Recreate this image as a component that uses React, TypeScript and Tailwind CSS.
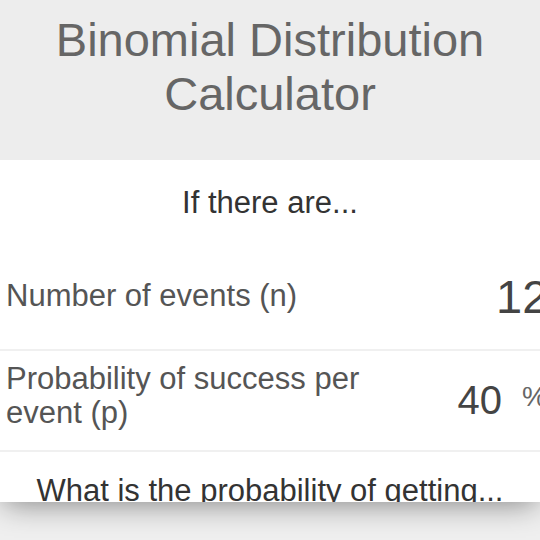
import type { FC } from "react";

const font = { fontFamily: '"Liberation Sans", Arial, sans-serif' };

const App: FC = () => {
  return (
    <div className="w-[540px] h-[540px] overflow-hidden bg-[#efefef]" style={font}>
      <div className="relative w-[540px] h-[502px] overflow-hidden bg-white shadow-[0_6px_28px_-4px_rgba(0,0,0,0.45)]">
        <header className="h-[160px] bg-[#ededed] pt-[13px] text-center">
          <h1 className="text-[47px] leading-[54px] text-[#666666]">
            Binomial Distribution
            <br />
            Calculator
          </h1>
        </header>

        <section>
          <div className="h-[90px] pt-[27px] text-center text-[31px] leading-[32px] text-[#333333]">
            If there are...
          </div>

          <div className="flex h-[101px] items-start border-b-2 border-[#f0f0f0]">
            <label className="w-[496px] shrink-0 pl-[6px] pt-[30px] text-[31px] leading-[32px] text-[#555555]">
              Number of events (n)
            </label>
            <span className="shrink-0 whitespace-nowrap pt-[23px] text-[47px] leading-[47px] text-[#444444]">
              12
            </span>
          </div>

          <div className="flex h-[101px] items-start border-b-2 border-[#f0f0f0]">
            <label className="w-[420px] shrink-0 pl-[6px] pt-[11px] text-[31px] leading-[34px] text-[#555555]">
              Probability of success per event (p)
            </label>
            <div className="flex shrink-0 items-center pt-[29px]">
              <span className="w-[82px] text-right text-[40px] leading-[40px] text-[#444444]">
                40
              </span>
              <span className="ml-[20px] mb-[6px] whitespace-nowrap text-[28px] leading-[28px] text-[#666666]">
                %
              </span>
            </div>
          </div>

          <div className="pt-[23px] text-center text-[31px] leading-[32px] whitespace-nowrap text-[#333333]">
            What is the probability of getting...
          </div>
        </section>
      </div>
    </div>
  );
};

export default App;
